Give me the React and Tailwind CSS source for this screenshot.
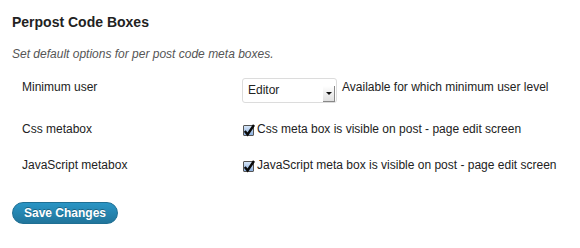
export default function App() {
  const font = { fontFamily: '"Liberation Sans", Arial, sans-serif' };
  return (
    <div className="w-[580px] h-[248px] bg-white text-[#333] overflow-hidden" style={font}>
      <div className="pl-[12px] pt-[13px]">
        <h2 className="text-[14px] font-bold leading-[18px] text-[#222]">Perpost Code Boxes</h2>
        <p className="mt-[15px] text-[12px] italic leading-[16px] text-[#555]">Set default options for per post code meta boxes.</p>
      </div>
      <div className="pl-[22px] mt-[16px] text-[12px] leading-[16px] text-[#222]">
        <div className="flex items-start h-[25px]">
          <div className="w-[220px] pt-[1px]">Minimum user</div>
          <div className="relative w-[95px] h-[25px] border border-[#dcdcdc] rounded-[3px] bg-white pl-[5px] pt-[3px]">
            <span>Editor</span>
            <div className="absolute right-[1px] top-[7px] w-[12px] h-[16px] bg-gradient-to-b from-white to-[#e0e0e0] border-r border-b border-[#888] flex items-center justify-center">
              <svg width="6" height="3" viewBox="0 0 6 3"><path d="M0 0h6L3 3z" fill="#111" /></svg>
            </div>
          </div>
          <span className="ml-[5px] pt-[1px]">Available for which minimum user level</span>
        </div>
        <div className="flex items-start h-[16px] mt-[18px]">
          <div className="w-[221px]">Css metabox</div>
          <Check />
          <span className="ml-[3px]">Css meta box is visible on post - page edit screen</span>
        </div>
        <div className="flex items-start h-[16px] mt-[20px]">
          <div className="w-[221px]">JavaScript metabox</div>
          <Check />
          <span className="ml-[3px]">JavaScript meta box is visible on post - page edit screen</span>
        </div>
      </div>
      <div className="pl-[12px] mt-[27px]">
        <button className="h-[22px] w-[106px] rounded-full bg-gradient-to-b from-[#2a95c5] to-[#21759b] border border-[#1f6f93] text-white text-[12px] font-bold leading-[20px] [text-shadow:0_-1px_0_rgba(0,0,0,0.3)]">Save Changes</button>
      </div>
    </div>
  );
}

function Check() {
  return (
    <div className="mt-[4px] w-[11px] h-[11px] border border-[#555] bg-gradient-to-b from-[#d6e5f7] to-[#8cb0de] relative rounded-[1px] shrink-0">
      <svg className="absolute left-[-1px] top-[-3px]" width="13" height="14" viewBox="0 0 13 14">
        <path d="M1.8 8 L4.6 11.5 L11 2" stroke="#0a0a0a" strokeWidth="2.4" fill="none" />
      </svg>
    </div>
  );
}
